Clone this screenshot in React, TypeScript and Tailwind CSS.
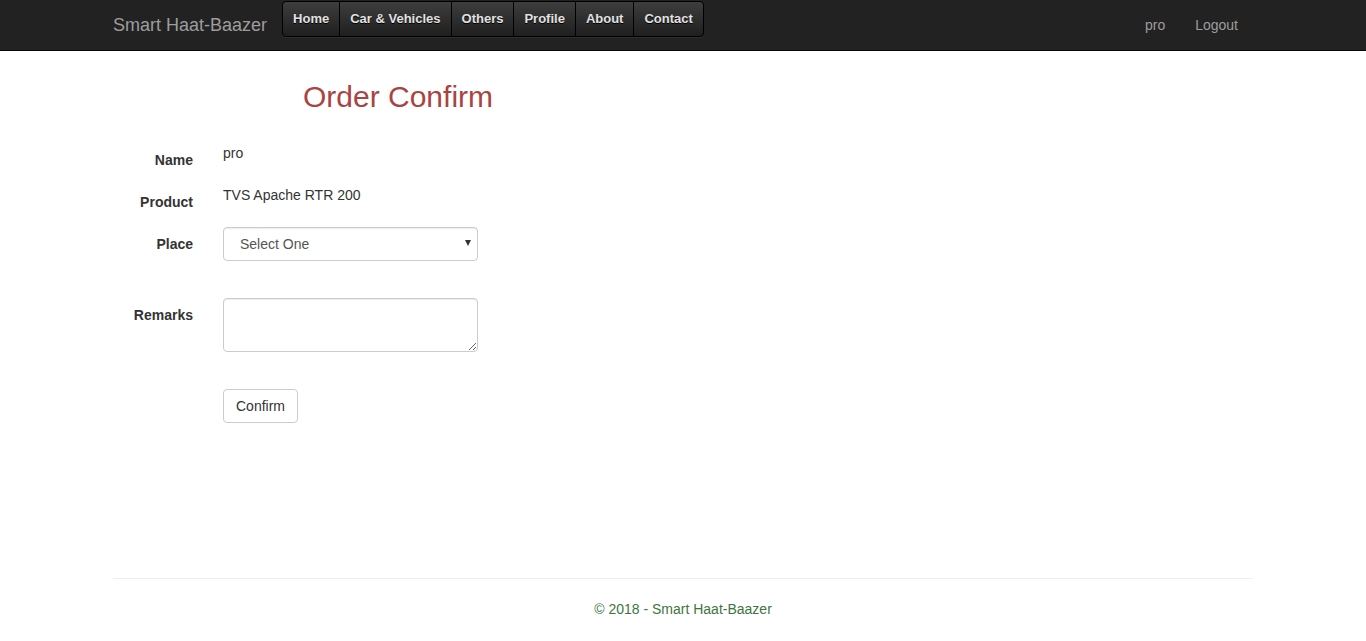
import React from 'react';

const menu = ['Home', 'Car & Vehicles', 'Others', 'Profile', 'About', 'Contact'];

export default function App() {
  return (
    <div className="min-h-screen bg-white text-[14px] leading-[20px] text-[#333]" style={{ fontFamily: '"Liberation Sans", Arial, sans-serif' }}>
      {/* navbar */}
      <nav className="h-[51px] bg-[#222] border-b border-[#080808]">
        <div className="w-[1170px] mx-auto px-[15px] flex items-start">
          <a className="text-[18px] leading-[20px] py-[15px] pr-[15px] text-[#9d9d9d]">Smart Haat-Baazer</a>
          <ul className="mt-px flex h-[36px] rounded-[4px] border border-black bg-gradient-to-b from-[#3e3e3e] to-[#1f1f1f] shadow-[0_1px_1px_rgba(255,255,255,0.06)] overflow-hidden">
            {menu.map((m, i) => (
              <li
                key={m}
                className={
                  'px-[10px] flex items-center text-[13px] font-bold text-[#e2e2e2] [text-shadow:0_1px_0_#000] ' +
                  (i < menu.length - 1 ? 'border-r border-black' : '')
                }
              >
                {m}
              </li>
            ))}
          </ul>
          <ul className="ml-auto flex">
            <li className="px-[15px] py-[15px] text-[#9d9d9d]">pro</li>
            <li className="px-[15px] py-[15px] text-[#9d9d9d]">Logout</li>
          </ul>
        </div>
      </nav>

      <div className="w-[1170px] mx-auto px-[15px]">
        <h2 className="mt-[29px] pl-[190px] text-[30px] leading-[33px] text-[#a94442]">Order Confirm</h2>

        <form className="mt-[30px]">
          <div className="flex items-start mb-[15px]">
            <label className="w-[80px] text-right font-bold pt-[7px]">Name</label>
            <div className="ml-[30px]">pro</div>
          </div>
          <div className="flex items-start mb-[15px]">
            <label className="w-[80px] text-right font-bold pt-[7px]">Product</label>
            <div className="ml-[30px]">TVS Apache RTR 200</div>
          </div>
          <div className="flex items-start mb-[37px]">
            <label className="w-[80px] text-right font-bold pt-[7px]">Place</label>
            <div className="ml-[30px] relative w-[255px]">
              <select className="appearance-none w-full h-[34px] pl-[16px] pr-[24px] border border-[#ccc] rounded-[4px] bg-white text-[#555] text-[14px] shadow-[inset_0_1px_1px_rgba(0,0,0,0.075)]">
                <option>Select One</option>
              </select>
              <span className="pointer-events-none absolute right-[7px] top-[13px] w-0 h-0 border-l-[3.5px] border-r-[3.5px] border-t-[6px] border-l-transparent border-r-transparent border-t-[#333]" />
            </div>
          </div>
          <div className="flex items-start mb-[37px]">
            <label className="w-[80px] text-right font-bold pt-[7px]">Remarks</label>
            <textarea className="ml-[30px] block w-[255px] h-[54px] px-[12px] py-[6px] border border-[#ccc] rounded-[4px] text-[#555] shadow-[inset_0_1px_1px_rgba(0,0,0,0.075)]" />
          </div>
          <div className="flex items-start">
            <div className="w-[80px]" />
            <button type="button" className="ml-[30px] h-[34px] px-[12px] border border-[#ccc] rounded-[4px] bg-white text-[#333]">
              Confirm
            </button>
          </div>
        </form>

        <hr className="mt-[155px] border-t border-[#eee]" />
        <footer className="mt-[20px] text-center text-[#3c763d]">© 2018 - Smart Haat-Baazer</footer>
      </div>
    </div>
  );
}
